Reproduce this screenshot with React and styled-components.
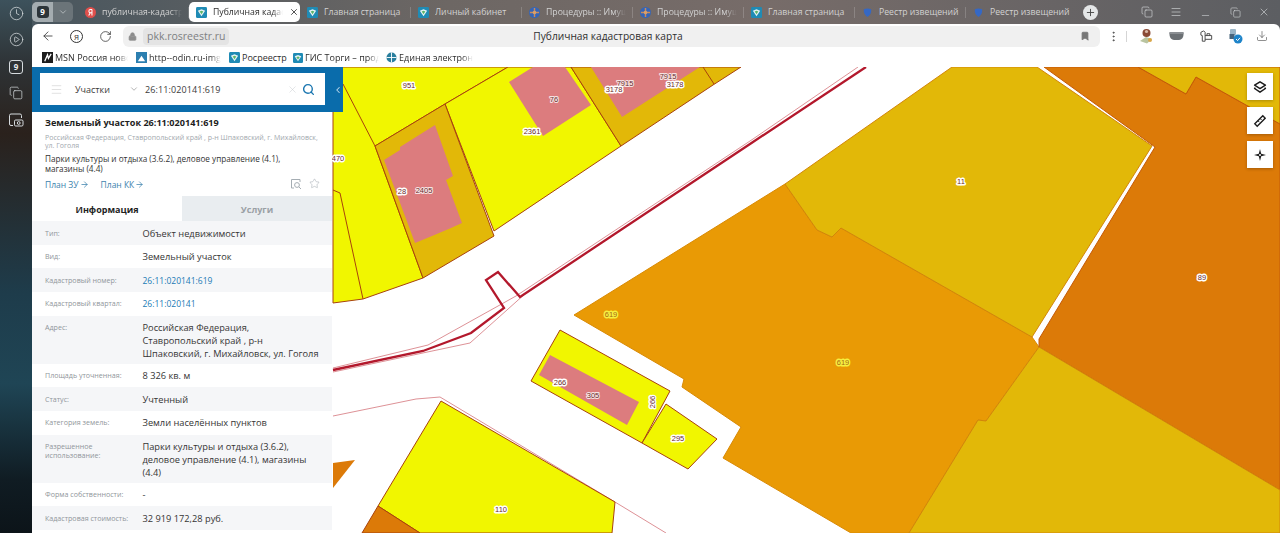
import React from 'react';
import styled, { createGlobalStyle } from 'styled-components';
import {
  ArrowLeft, RotateCw, Lock, Bookmark, EllipsisVertical, Download, Menu, X, Plus,
  ChevronDown, ChevronLeft, Search, Clock, CirclePlay, Copy, Star, ArrowRight, Minus,
} from 'lucide-react';

const GlobalStyle = createGlobalStyle`
  html, body { margin: 0; padding: 0; height: 100%; overflow: hidden; background: #fff; }
  * { box-sizing: border-box; }
  body { font-family: "Open Sans", "Noto Sans", sans-serif; }
`;

const Page = styled.div`
  display: flex;
  width: 1280px;
  height: 533px;
  overflow: hidden;
  background: linear-gradient(90deg, #46555e 0%, #6d6764 35%, #776c69 60%, #5c5e62 100%);
`;

/* left rail of the browser */
const Rail = styled.aside`
  width: 32px;
  flex: none;
  display: flex;
  flex-direction: column;
  align-items: center;
  padding-top: 4px;
  gap: 8.75px;
  color: #d7dcdf;
  background: linear-gradient(180deg, #3d525c 0%, #2e3336 12%, #2a211c 25%, #1e3c4b 55%, #1f4555 72%, #101c23 90%, #0c1419 100%);
`;

const RailButton = styled.div`
  width: 18px;
  height: 18px;
  display: flex;
  align-items: center;
  justify-content: center;
`;

const CountBox = styled.div`
  width: 14px;
  height: 14px;
  border: 1px solid #d7dcdf;
  border-radius: 3px;
  font-size: 8px;
  font-weight: 700;
  line-height: 12px;
  text-align: center;
  color: #e8ebed;
`;

const Main = styled.div`
  flex: 1;
  min-width: 0;
  display: flex;
  flex-direction: column;
`;

/* tab strip */
const TabStrip = styled.div`
  height: 24px;
  flex: none;
  display: flex;
  align-items: center;
`;

const SpaceChip = styled.div`
  width: 41px;
  height: 20px;
  margin-right: 5px;
  flex: none;
  display: flex;
  border-radius: 5px;
  overflow: hidden;
  background: #6b7479;
`;

const SpaceNum = styled.div`
  width: 21px;
  display: flex;
  align-items: center;
  justify-content: center;
  background: #a4acb0;
`;

const SpaceBadge = styled.div`
  width: 12px;
  height: 12px;
  border-radius: 3px;
  background: #2c3439;
  color: #fff;
  font-size: 8px;
  font-weight: 700;
  line-height: 12px;
  text-align: center;
`;

const SpaceArrow = styled.div`
  flex: 1;
  display: flex;
  align-items: center;
  justify-content: center;
  color: #b9bfc2;
`;

const Tab = styled.div`
  width: 111px;
  height: 20px;
  flex: none;
  position: relative;
  display: flex;
  align-items: center;
  padding-left: 7px;
  gap: 6px;
  border-radius: 5px;
  background: ${p => (p.$active ? '#fff' : 'transparent')};
  color: ${p => (p.$active ? '#2c2c2c' : '#d2d2d2')};
  font-size: 8.7px;

  ${p => !p.$active && !p.$noSep && `
    &::after {
      content: '';
      position: absolute;
      right: 0;
      top: 5px;
      height: 11px;
      width: 1px;
      background: rgba(255, 255, 255, 0.18);
    }
  `}
`;

const TabLabel = styled.span`
  flex: none;
  width: ${p => p.$w || 82}px;
  white-space: nowrap;
  overflow: hidden;
  -webkit-mask-image: ${p => (p.$fade ? 'linear-gradient(90deg, #000 85%, transparent)' : 'none')};
`;

const TabClose = styled.div`
  flex: none;
  display: flex;
  color: #333;
`;

const NewTab = styled.div`
  width: 15px;
  height: 15px;
  margin-left: 6px;
  flex: none;
  border-radius: 50%;
  background: #e4e6e7;
  color: #444;
  display: flex;
  align-items: center;
  justify-content: center;
`;

const WindowButtons = styled.div`
  margin-left: auto;
  display: flex;
  align-items: center;
  padding-right: 1px;
  color: #dcdfe1;
`;

const WindowButton = styled.div`
  width: 29.3px;
  display: flex;
  justify-content: center;
  padding-top: ${p => (p.$low ? 6 : 0)}px;
`;

/* white part of the browser */
const Chrome = styled.div`
  flex: 1;
  min-height: 0;
  display: flex;
  flex-direction: column;
  background: #fff;
  border-radius: 6px 6px 0 0;
  overflow: hidden;
`;

const Toolbar = styled.div`
  height: 24px;
  flex: none;
  display: flex;
  align-items: center;
  padding-left: 1px;
  color: #333;
`;

const NavButton = styled.div`
  width: 29px;
  display: flex;
  justify-content: center;
`;

const YaRing = styled.div`
  width: 13px;
  height: 13px;
  border: 1px solid #333;
  border-radius: 50%;
  font-size: 8px;
  line-height: 11px;
  text-align: center;
`;

const AddressPill = styled.div`
  width: 977px;
  height: 21px;
  margin-left: 3px;
  flex: none;
  display: grid;
  grid-template-columns: 1fr auto 1fr;
  align-items: center;
  padding: 0 10px 0 5px;
  background: #f0f0f0;
  border-radius: 6px;
`;

const AddressLeft = styled.div`
  display: flex;
  align-items: center;
  gap: 6px;
  color: #8d8d8d;
`;

const UrlChip = styled.span`
  padding: 0 4px;
  height: 17px;
  line-height: 17px;
  border-radius: 4px;
  background: #e4e4e4;
  color: #7d7f82;
  font-size: 10.5px;
`;

const PageTitle = styled.div`
  font-size: 10.2px;
  color: #2f2f2f;
  white-space: nowrap;
  margin-right: 2px;
`;

const PillEnd = styled.div`
  display: flex;
  justify-content: flex-end;
  color: #777;
`;

const ToolIcons = styled.div`
  flex: 1;
  display: flex;
  align-items: center;
  padding-left: 7px;
  color: #444;
`;

const ToolSep = styled.div`
  width: 1px;
  height: 11px;
  background: #d5d5d5;
  margin: 0 4px 0 6px;
`;

const ExtSlot = styled.div`
  width: ${p => p.$w || 30}px;
  display: flex;
  justify-content: center;
`;

const Bookmarks = styled.div`
  height: 19px;
  flex: none;
  display: flex;
  align-items: center;
  padding-left: 10px;
  color: #2e2e2e;
  font-size: 9px;
`;

const BookmarkItem = styled.div`
  width: ${p => p.$w}px;
  flex: none;
  display: flex;
  align-items: center;
  gap: 2px;
`;

const BookmarkLabel = styled.span`
  white-space: nowrap;
  overflow: hidden;
  -webkit-mask-image: ${p => (p.$fade ? 'linear-gradient(90deg, #000 85%, transparent)' : 'none')};
  width: ${p => p.$w}px;
`;

/* page content */
const Stage = styled.div`
  flex: 1;
  min-height: 0;
  display: flex;
`;

const Panel = styled.section`
  width: 300px;
  flex: none;
  position: relative;
  z-index: 2;
  background: #fff;
  display: flex;
  flex-direction: column;
`;

const SearchHead = styled.div`
  height: 45px;
  flex: none;
  padding: 6px 7px 7px 8px;
  background: #0a6cab;
  position: relative;
`;

const CollapseHandle = styled.div`
  position: absolute;
  top: 0;
  right: -11px;
  width: 11px;
  height: 45px;
  background: #0a6cab;
  color: #bcd9ec;
  display: flex;
  align-items: center;
  justify-content: center;
`;

const SearchBox = styled.div`
  height: 32px;
  display: flex;
  align-items: center;
  background: #fff;
  padding: 0 10px;
  font-size: 9px;
  color: #3b3b3b;
`;

const Burger = styled.div`
  width: 25px;
  display: flex;
  color: #c8c8c8;
`;

const SearchCategory = styled.div`
  width: 54px;
  flex: none;
`;

const SearchArrow = styled.div`
  width: 16px;
  display: flex;
  color: #a6a6a6;
`;

const SearchValue = styled.div`
  flex: 1;
  letter-spacing: 0.1px;
`;

const SearchIcons = styled.div`
  display: flex;
  align-items: center;
  gap: 4px;
`;

const Summary = styled.div`
  flex: none;
  height: 84px;
  padding: 4px 13px 0;
`;

const SummaryTitle = styled.h1`
  margin: 0;
  font-size: 9.1px;
  line-height: 14px;
  font-weight: 700;
  color: #1d1d1d;
  white-space: nowrap;
`;

const SummaryAddress = styled.div`
  margin: 4px -4px 0 0;
  font-size: 7px;
  line-height: 8px;
  color: #a2a8ae;
`;

const SummaryUse = styled.div`
  margin-top: 4px;
  font-size: 8.2px;
  line-height: 10px;
  color: #333;
`;

const SummaryLinks = styled.div`
  margin-top: 4px;
  display: flex;
  align-items: center;
  gap: 12px;
  font-size: 8.5px;
  color: #3d83ad;
`;

const LinkItem = styled.span`
  display: flex;
  align-items: center;
  gap: 1px;
`;

const SummaryActions = styled.div`
  margin-left: auto;
  margin-right: -1px;
  display: flex;
  gap: 7px;
  color: #a5adb3;
`;

const Tabs = styled.div`
  flex: none;
  height: 25px;
  display: flex;
`;

const InfoTab = styled.div`
  flex: 1;
  display: flex;
  align-items: center;
  justify-content: center;
  padding-top: 1px;
  font-size: 9px;
  font-weight: 700;
  color: ${p => (p.$active ? '#1f1f1f' : '#9aa0a5')};
  background: ${p => (p.$active ? '#fff' : '#e9edf0')};
`;

const Rows = styled.div`
  flex: 1;
  min-height: 0;
  overflow: hidden;
`;

const Row = styled.div`
  display: grid;
  grid-template-columns: 97.5px 1fr;
  padding: 6.5px 13px 0;
  height: ${p => (p.$tall ? 48 : 23.67)}px;
  background: ${p => (p.$shade ? '#f5f6f8' : '#fff')};
`;

const RowLabel = styled.div`
  font-size: 7.1px;
  line-height: 9px;
  padding-top: 1px;
  color: #8f959a;
`;

const RowValue = styled.div`
  line-height: 12.7px;
  color: ${p => (p.$link ? '#1a7ab5' : '#353535')};
  font-size: ${p => (p.$link ? '8.5px' : '9.25px')};
`;

const MapArea = styled.div`
  flex: 1;
  min-width: 0;
  position: relative;
  background: #fff;
`;

const MapDrawing = styled.svg`
  display: block;
`;

const MapTools = styled.div`
  position: absolute;
  top: 6px;
  right: 7px;
  display: flex;
  flex-direction: column;
  gap: 7px;
`;

const MapTool = styled.div`
  width: 26px;
  height: 27px;
  background: #fff;
  box-shadow: 0 1px 3px rgba(0, 0, 0, 0.25);
  display: flex;
  align-items: center;
  justify-content: center;
`;

const ParcelLabel = styled.text`
  font-family: "Liberation Sans", sans-serif;
  font-size: 7.5px;
  text-anchor: middle;
  dominant-baseline: central;
  fill: ${p => p.$fill || '#6b2b2b'};
  stroke: ${p => p.$halo || '#fff'};
  stroke-width: ${p => p.$haloWidth || 3}px;
  stroke-linejoin: round;
  paint-order: stroke;
`;

const RosIcon = ({ size = 11 }) => (
  <svg width={size} height={size} viewBox="0 0 12 12" style={{ flex: 'none' }}>
    <rect width="12" height="12" rx="1.5" fill="#1f8bb5" />
    <path d="M2 4 L6 2.5 L10 4 L6 10 Z" fill="#e8f3f3" />
    <path d="M4 5 L6 4.2 L8 5 L6 7.8 Z" fill="#5bb56a" />
  </svg>
);

const YandexIcon = () => (
  <svg width="11" height="11" viewBox="0 0 12 12" style={{ flex: 'none' }}>
    <circle cx="6" cy="6" r="6" fill="#e0504c" />
    <path d="M7.6 2.6 V9.4 M7.6 2.8 H6 Q4.2 2.8 4.2 4.6 Q4.2 6.2 6 6.2 H7.6 M5.8 6.2 L4 9.4" stroke="#fff" strokeWidth="1.1" fill="none" />
  </svg>
);

const GlobeIcon = () => (
  <svg width="11" height="11" viewBox="0 0 12 12" style={{ flex: 'none' }}>
    <circle cx="6" cy="6" r="6" fill="#3465b8" />
    <path d="M1 6 H11 M6 1 V11" stroke="#c98b5a" strokeWidth="1.6" />
    <circle cx="6" cy="6" r="2" fill="#d8a06a" />
  </svg>
);

const ShieldIcon = () => (
  <svg width="11" height="11" viewBox="0 0 12 12" style={{ flex: 'none' }}>
    <path d="M2 2.5 Q6 0.5 10 2.5 Q10.5 8 6 11 Q1.5 8 2 2.5 Z" fill="#3568c4" />
  </svg>
);

const CameraFrame = () => (
  <svg width="16" height="16" viewBox="0 0 16 16" fill="none" stroke="#d7dcdf" strokeWidth="1">
    <path d="M5 13.5 H3 Q1.5 13.5 1.5 12 V3.5 Q1.5 2 3 2 H12 Q13.5 2 13.5 3.5 V6" />
    <rect x="6.5" y="8" width="8.5" height="6" rx="1.2" />
    <circle cx="10.7" cy="11" r="1.4" />
  </svg>
);

const FrameSearchIcon = () => (
  <svg width="12" height="12" viewBox="0 0 12 12" fill="none" stroke="#a5adb3" strokeWidth="1">
    <path d="M4 10 H1.5 V1.5 H10 V4" />
    <circle cx="7" cy="7" r="2.4" />
    <path d="M8.8 8.8 L11 11" />
  </svg>
);

const ShirtIcon = () => (
  <svg width="15" height="15" viewBox="0 0 16 16" fill="none" stroke="#444" strokeWidth="1">
    <path d="M2 3.5 L5 2 L6.5 3.5 V13 H3.5 V7 L2 6.5 Z" />
    <path d="M6.5 7 H13.5 V11 H6.5 M8.5 7 V5 H11.5 V7" />
  </svg>
);

const HatIcon = () => (
  <svg width="15" height="10" viewBox="0 0 15 10">
    <path d="M0.5 1.5 H14.5 V4 Q14 8.5 10 9 H5 Q1 8.5 0.5 4 Z" fill="#6b7074" />
    <rect x="0.5" y="1" width="14" height="2" fill="#8b8f93" />
  </svg>
);

const AvatarIcon = () => (
  <svg width="15" height="16" viewBox="0 0 15 16">
    <circle cx="7.5" cy="5" r="4" fill="#8a4a36" />
    <circle cx="7.5" cy="3.5" r="1.6" fill="#d8b9a8" />
    <path d="M1 13 L7 9 L13 11 L8 15.5 Z" fill="#b9c4a0" />
    <circle cx="11" cy="12" r="2" fill="#d9a648" />
  </svg>
);

const CheckExtIcon = () => (
  <svg width="14" height="16" viewBox="0 0 14 16">
    <rect x="1" y="1" width="6" height="6" rx="1" fill="#9bb5c6" />
    <rect x="0.5" y="6" width="5" height="5" fill="#47647c" />
    <circle cx="9" cy="11" r="4.5" fill="#1e84c9" />
    <path d="M7 11 L8.6 12.6 L11 9.8" stroke="#fff" strokeWidth="1" fill="none" />
  </svg>
);

const LayersGlyph = () => (
  <svg width="14" height="14" viewBox="0 0 14 14" fill="none" stroke="#1d1d1d" strokeWidth="1.5" strokeLinejoin="round">
    <path d="M7 1.8 L12.4 5.2 L7 8.6 L1.6 5.2 Z" />
    <path d="M2.3 7.6 L1.6 8.5 L7 12.2 L12.4 8.5 L11.7 7.6" />
  </svg>
);

const RulerGlyph = () => (
  <svg width="14" height="14" viewBox="0 0 14 14" fill="none" stroke="#1d1d1d" strokeWidth="1.4">
    <path d="M9.8 1.8 L12.2 4.2 L4.2 12.2 L1.8 9.8 Z" />
    <path d="M7.2 4.6 L8.6 6 M5 6.8 L6.4 8.2" strokeWidth="1" />
  </svg>
);

const LocateGlyph = () => (
  <svg width="14" height="14" viewBox="0 0 14 14">
    <path d="M7 1 L8.2 5.8 L13 7 L8.2 8.2 L7 13 L5.8 8.2 L1 7 L5.8 5.8 Z" fill="#1d1d1d" />
    <circle cx="7" cy="7" r="1" fill="#fff" />
  </svg>
);

const BROWSER_TABS = [
  { title: 'публичная-кадастр', icon: <YandexIcon />, fade: true },
  { title: 'Публичная кадас', icon: <RosIcon />, active: true, fade: true },
  { title: 'Главная страница', icon: <RosIcon /> },
  { title: 'Личный кабинет', icon: <RosIcon /> },
  { title: 'Процедуры :: Имущ', icon: <GlobeIcon />, fade: true },
  { title: 'Процедуры :: Имущ', icon: <GlobeIcon />, fade: true },
  { title: 'Главная страница', icon: <RosIcon /> },
  { title: 'Реестр извещений', icon: <ShieldIcon /> },
  { title: 'Реестр извещений', icon: <ShieldIcon />, noSep: true },
];

const BOOKMARKS = [
  { title: 'MSN Россия новс', w: 94, lw: 73, fade: true, icon: <svg width="11" height="11" viewBox="0 0 12 12" style={{ flex: 'none' }}><rect width="12" height="12" fill="#1d1d1d" /><path d="M3 10 L6 3 L7 7 L10 2" stroke="#fff" strokeWidth="1.4" fill="none" /></svg> },
  { title: 'http--odin.ru-img-', w: 93, lw: 72, fade: true, icon: <svg width="11" height="11" viewBox="0 0 12 12" style={{ flex: 'none' }}><rect width="12" height="12" fill="#2c7fb0" /><path d="M2 10 L6 4 L10 10 Z" fill="#fff" /></svg> },
  { title: 'Росреестр', w: 64, lw: 48, icon: <RosIcon /> },
  { title: 'ГИС Торги – прод', w: 93, lw: 74, fade: true, icon: <RosIcon size={10} /> },
  { title: 'Единая электрон', w: 100, lw: 74, fade: true, icon: <svg width="11" height="11" viewBox="0 0 12 12" style={{ flex: 'none' }}><circle cx="6" cy="6" r="5.5" fill="#2a7f9e" /><path d="M0.5 6 H11.5 M6 0.5 V11.5" stroke="#fff" /></svg> },
];

const INFO_ROWS = [
  { label: 'Тип:', value: 'Объект недвижимости', shade: true },
  { label: 'Вид:', value: 'Земельный участок' },
  { label: 'Кадастровый номер:', value: '26:11:020141:619', shade: true, link: true },
  { label: 'Кадастровый квартал:', value: '26:11:020141', link: true },
  { label: 'Адрес:', value: 'Российская Федерация, Ставропольский край , р-н Шпаковский, г. Михайловск, ул. Гоголя', shade: true, tall: true },
  { label: 'Площадь уточненная:', value: '8 326 кв. м' },
  { label: 'Статус:', value: 'Учтенный', shade: true },
  { label: 'Категория земель:', value: 'Земли населённых пунктов' },
  { label: 'Разрешенное использование:', value: 'Парки культуры и отдыха (3.6.2), деловое управление (4.1), магазины (4.4)', shade: true, tall: true },
  { label: 'Форма собственности:', value: '-' },
  { label: 'Кадастровая стоимость:', value: '32 919 172,28 руб.', shade: true },
];

const YELLOW = '#f1f600';
const GOLD = '#e2b808';
const ORANGE = '#e99a05';
const DARK = '#dc7a08';
const PINK = '#dc7c7e';
const EDGE = '#a8420c';

const PARCELS = [
  { fill: YELLOW, points: '333,67 508,67 445,104 375,146 423,278 363,299 333,303' },
  { fill: YELLOW, points: '508,67 571,67 621,146 494,231 445,104' },
  { fill: GOLD, points: '375,146 445,104 494,236 423,278' },
  { fill: GOLD, points: '571,67 741,67 713,85 621,146' },
  { fill: ORANGE, stroke: '#d98a05', points: '574,315 785,184 817,230 832,237 841,228 1032,337 1039,347 986,421 978,420 909,533 851,533 723,458 741,427 682,387 684,379' },
  { fill: GOLD, stroke: '#d2860a', points: '952,67 1037,67 1152,146 1032,337 841,228 832,237 817,230 785,184' },
  { fill: DARK, stroke: '#c45a08', points: '1044,67 1138,67 1186,94 1196,77 1280,124 1280,490 1039,347 1039,339 1155,147' },
  { fill: GOLD, stroke: '#c45a08', points: '1138,67 1280,67 1280,124 1196,77 1186,94' },
  { fill: GOLD, stroke: '#d2860a', points: '1039,347 1280,490 1280,533 909,533 978,420 986,421' },
  { fill: YELLOW, points: '441,401 615,502 612,533 420,533 378,506' },
  { fill: DARK, points: '378,506 420,533 362,533' },
  { fill: DARK, stroke: 'none', points: '355,460 333,463 333,488' },
  { fill: YELLOW, points: '560,330 670,391 642,443 531,381' },
  { fill: YELLOW, points: '666,404 717,439 688,469 642,443' },
];

const BUILDINGS = [
  '509,82 533,67 565,67 591,105 543,136',
  '591,67 622,117 700,67',
  '384,160 400,150 400,147 435,125 453,176 446,180 462,223 451,228 432,236 415,243',
  '550,355 639,402 627,425 539,375',
];

const LOT_LINES = ['333,190 340,193 363,299', '343,84 375,146', '703,67 714,84'];

const THIN_LINES = [
  '858,67 753,139 516,296 428,345 333,368',
  '526,293 470,343 333,372',
  '333,416 416,399 440,397 615,502 666,533',
];

const LABELS = [
  { x: 409, y: 85, t: '951' }, { x: 338, y: 158, t: '470' }, { x: 554, y: 99, t: '76', onPink: true },
  { x: 532, y: 131, t: '2361' }, { x: 402, y: 191, t: '28' }, { x: 424, y: 190, t: '2405', onPink: true },
  { x: 625, y: 83, t: '7915', onPink: true }, { x: 614, y: 89, t: '3178' },
  { x: 668, y: 76, t: '7915', onPink: true }, { x: 675, y: 84, t: '3178' },
  { x: 611, y: 314, t: '619', halo: '#f6ef40', fill: '#a86a10' }, { x: 560, y: 382, t: '266' },
  { x: 593, y: 395, t: '305', onPink: true }, { x: 678, y: 438, t: '295' }, { x: 501, y: 509, t: '110' },
  { x: 961, y: 181, t: '11' }, { x: 1202, y: 277, t: '89' }, { x: 843, y: 362, t: '619', halo: '#f6ef40', fill: '#a86a10' },
];

const App = () => (
  <>
    <GlobalStyle />
    <Page>
      <Rail>
        <RailButton><Clock size={15} strokeWidth={1.2} /></RailButton>
        <RailButton><CirclePlay size={15} strokeWidth={1.2} /></RailButton>
        <RailButton><CountBox>9</CountBox></RailButton>
        <RailButton><Copy size={14} strokeWidth={1.2} /></RailButton>
        <RailButton><CameraFrame /></RailButton>
      </Rail>

      <Main>
        <TabStrip>
          <SpaceChip>
            <SpaceNum><SpaceBadge>9</SpaceBadge></SpaceNum>
            <SpaceArrow><ChevronDown size={10} /></SpaceArrow>
          </SpaceChip>
          {BROWSER_TABS.map((tab, i) => (
            <Tab key={i} $active={tab.active} $noSep={tab.noSep}>
              {tab.icon}
              <TabLabel $fade={tab.fade} $w={tab.active ? 70 : 80}>{tab.title}</TabLabel>
              {tab.active && <TabClose><X size={10} /></TabClose>}
            </Tab>
          ))}
          <NewTab><Plus size={11} /></NewTab>
          <WindowButtons>
            <WindowButton><Copy size={12} strokeWidth={1.2} /></WindowButton>
            <WindowButton><Menu size={12} strokeWidth={1.2} /></WindowButton>
            <WindowButton $low><Minus size={11} strokeWidth={1.2} /></WindowButton>
            <WindowButton><Copy size={11} strokeWidth={1.2} /></WindowButton>
            <WindowButton><X size={12} strokeWidth={1.2} /></WindowButton>
          </WindowButtons>
        </TabStrip>

        <Chrome>
          <Toolbar>
            <NavButton><ArrowLeft size={14} strokeWidth={1.4} /></NavButton>
            <NavButton><YaRing>Я</YaRing></NavButton>
            <NavButton><RotateCw size={13} strokeWidth={1.4} /></NavButton>
            <AddressPill>
              <AddressLeft>
                <Lock size={9} fill="#8d8d8d" />
                <UrlChip>pkk.rosreestr.ru</UrlChip>
              </AddressLeft>
              <PageTitle>Публичная кадастровая карта</PageTitle>
              <PillEnd><Bookmark size={10} fill="#777" /></PillEnd>
            </AddressPill>
            <ToolIcons>
              <EllipsisVertical size={13} strokeWidth={1.5} />
              <ToolSep />
              <ExtSlot><AvatarIcon /></ExtSlot>
              <ExtSlot><HatIcon /></ExtSlot>
              <ExtSlot><ShirtIcon /></ExtSlot>
              <ExtSlot><CheckExtIcon /></ExtSlot>
              <ExtSlot $w={22}><Download size={12} strokeWidth={1.2} /></ExtSlot>
            </ToolIcons>
          </Toolbar>

          <Bookmarks>
            {BOOKMARKS.map(b => (
              <BookmarkItem key={b.title} $w={b.w}>
                {b.icon}
                <BookmarkLabel $fade={b.fade} $w={b.lw}>{b.title}</BookmarkLabel>
              </BookmarkItem>
            ))}
          </Bookmarks>

          <Stage>
            <Panel>
              <SearchHead>
                <SearchBox>
                  <Burger><Menu size={13} strokeWidth={1} /></Burger>
                  <SearchCategory>Участки</SearchCategory>
                  <SearchArrow><ChevronDown size={10} /></SearchArrow>
                  <SearchValue>26:11:020141:619</SearchValue>
                  <SearchIcons>
                    <X size={11} strokeWidth={1} color="#c4c8cc" />
                    <Search size={13} strokeWidth={2.6} color="#1a76b0" />
                  </SearchIcons>
                </SearchBox>
                <CollapseHandle><ChevronLeft size={10} strokeWidth={2.5} /></CollapseHandle>
              </SearchHead>

              <Summary>
                <SummaryTitle>Земельный участок 26:11:020141:619</SummaryTitle>
                <SummaryAddress>Российская Федерация, Ставропольский край , р-н Шпаковский, г. Михайловск, ул. Гоголя</SummaryAddress>
                <SummaryUse>Парки культуры и отдыха (3.6.2), деловое управление (4.1), магазины (4.4)</SummaryUse>
                <SummaryLinks>
                  <LinkItem>План ЗУ <ArrowRight size={9} /></LinkItem>
                  <LinkItem>План КК <ArrowRight size={9} /></LinkItem>
                  <SummaryActions>
                    <FrameSearchIcon />
                    <Star size={11} strokeWidth={1.2} />
                  </SummaryActions>
                </SummaryLinks>
              </Summary>

              <Tabs>
                <InfoTab $active>Информация</InfoTab>
                <InfoTab>Услуги</InfoTab>
              </Tabs>

              <Rows>
                {INFO_ROWS.map(r => (
                  <Row key={r.label} $shade={r.shade} $tall={r.tall}>
                    <RowLabel>{r.label}</RowLabel>
                    <RowValue $link={r.link}>{r.value}</RowValue>
                  </Row>
                ))}
              </Rows>
            </Panel>

            <MapArea>
              <MapDrawing width="948" height="466" viewBox="332 67 948 466">
                {THIN_LINES.map(p => (
                  <polyline key={p} points={p} fill="none" stroke="#d9858a" strokeWidth="0.9" />
                ))}
                {PARCELS.map(p => (
                  <polygon key={p.points} points={p.points} fill={p.fill} stroke={p.stroke || EDGE} strokeWidth="1" />
                ))}
                {BUILDINGS.map(p => (
                  <polygon key={p} points={p} fill={PINK} />
                ))}
                {LOT_LINES.map(p => (
                  <polyline key={p} points={p} fill="none" stroke={EDGE} strokeWidth="1" />
                ))}
                <polyline
                  points="866,67 753,142 520,297 498,272 486,280 504,308 471,333 423,351 333,370"
                  fill="none"
                  stroke="#b3182c"
                  strokeWidth="2.3"
                />
                {LABELS.map(l => (
                  <ParcelLabel
                    key={`${l.x}-${l.t}`}
                    x={l.x}
                    y={l.y}
                    $fill={l.fill}
                    $halo={l.onPink ? '#f6e2e2' : l.halo}
                    $haloWidth={l.onPink ? 2 : 3}
                  >
                    {l.t}
                  </ParcelLabel>
                ))}
                <ParcelLabel x="652" y="402" transform="rotate(-90 652 402)">266</ParcelLabel>
              </MapDrawing>
              <MapTools>
                <MapTool><LayersGlyph /></MapTool>
                <MapTool><RulerGlyph /></MapTool>
                <MapTool><LocateGlyph /></MapTool>
              </MapTools>
            </MapArea>
          </Stage>
        </Chrome>
      </Main>
    </Page>
  </>
);

export default App;
